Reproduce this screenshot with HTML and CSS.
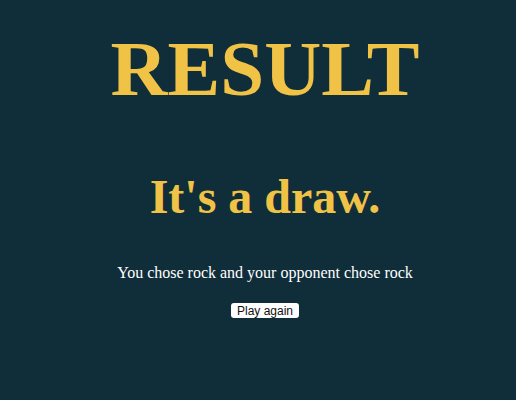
FILE: index.html
```html
<!DOCTYPE html>
<html>
<head>
<meta charset="utf-8">
<link rel="stylesheet" href="styles.css">
</head>
<body>
<main class="result">
  <h1 class="title">RESULT</h1>
  <h2 class="outcome">It's a draw.</h2>
  <p class="detail">You chose rock and your opponent chose rock</p>
  <button class="again">Play again</button>
</main>
</body>
</html>
```
FILE: styles.css
```css
html, body {
  margin: 0;
  padding: 0;
  height: 100%;
  background: #0f2e3a;
}
.result {
  display: flex;
  flex-direction: column;
  align-items: center;
  font-family: "Liberation Serif", "Times New Roman", serif;
  padding-top: 24px;
  padding-left: 14px;
}
.title {
  margin: 0;
  font-size: 79px;
  line-height: 90px;
  font-weight: bold;
  color: #f0c246;
}
.outcome {
  margin: 55px 0 0;
  font-size: 48px;
  line-height: 56px;
  font-weight: bold;
  color: #f0c246;
}
.detail {
  margin: 38px 0 0;
  font-size: 16px;
  line-height: 20px;
  color: #ffffff;
}
.again {
  margin-top: 20px;
  font-family: "Liberation Sans", Arial, sans-serif;
  font-size: 12px;
  line-height: 14px;
  height: 15px;
  padding: 0 6px;
  background: #ffffff;
  color: #111;
  border: none;
  border-radius: 3px;
}
```
